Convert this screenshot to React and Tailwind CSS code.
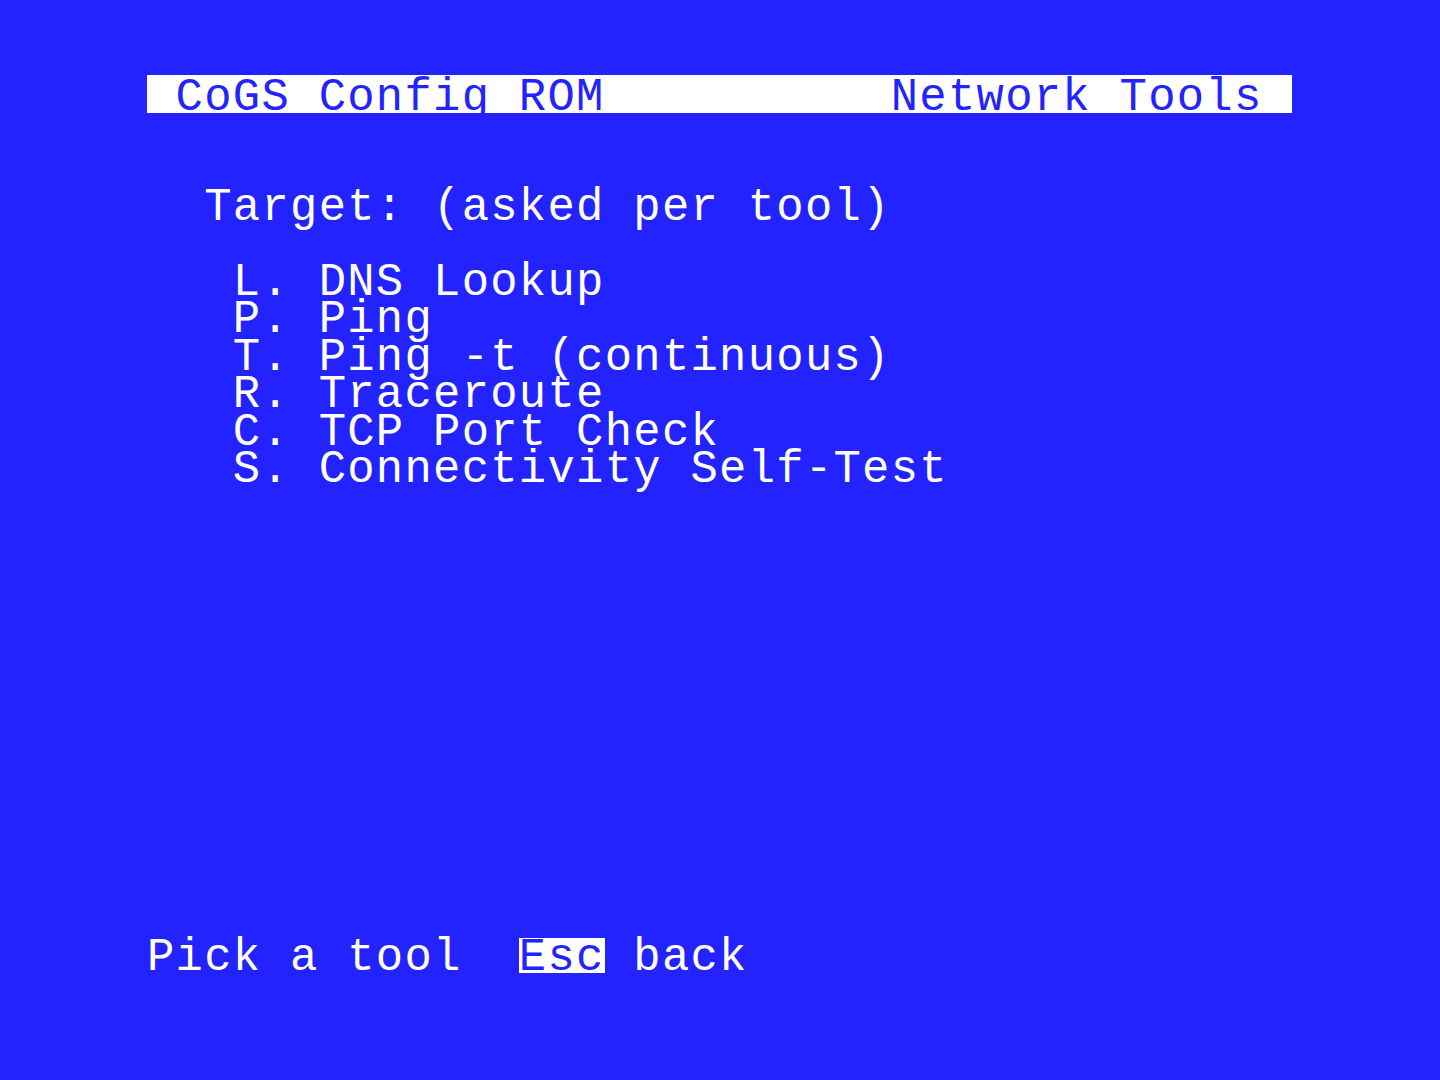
const rows = [
  { n: 3, text: "  Target: (asked per tool)" },
  { n: 5, text: "   L. DNS Lookup" },
  { n: 6, text: "   P. Ping" },
  { n: 7, text: "   T. Ping -t (continuous)" },
  { n: 8, text: "   R. Traceroute" },
  { n: 9, text: "   C. TCP Port Check" },
  { n: 10, text: "   S. Connectivity Self-Test" },
];

function Row({ children, className = "pt-[2px]" }) {
  return (
    <div className={`h-[37.5px] whitespace-pre leading-[37.5px] ${className}`}>
      {children}
    </div>
  );
}

export default function App() {
  const lines = [];
  for (let i = 1; i < 23; i++) {
    const r = rows.find((x) => x.n === i);
    lines.push(<Row key={i}>{r ? r.text : ""}</Row>);
  }

  return (
    <div className="w-full h-[1080px] bg-[#2323ff] pt-[75px] pl-[147px] text-white font-['Liberation_Mono',monospace] text-[45.5px] tracking-[1.3px] overflow-hidden">
      <div className="w-[1145px] h-[900px] flex flex-col">
        <Row className="bg-white text-[#2323ff] pt-[5px]">
          {" CoGS Config ROM          Network Tools "}
        </Row>
        {lines}
        <Row>
          {"Pick a tool  "}
          <span className="relative -top-[2px] inline-block align-top h-[35px] bg-white text-[#2323ff]">
            <span className="relative top-[2px]">Esc</span>
          </span>
          {" back"}
        </Row>
      </div>
    </div>
  );
}
